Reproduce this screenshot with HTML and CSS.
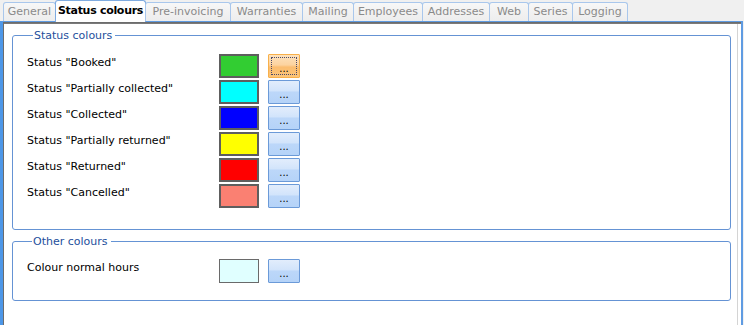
FILE: index.html
```html
<!DOCTYPE html>
<html>
<head>
  <meta charset="utf-8">
  <title>Settings</title>
  <link rel="stylesheet" href="styles.css">
</head>
<body>
  <div class="tabs">
    <div class="tab t-general">General</div>
    <div class="tab active t-status">Status colours</div>
    <div class="tab t-pre">Pre-invoicing</div>
    <div class="tab t-warr">Warranties</div>
    <div class="tab t-mail">Mailing</div>
    <div class="tab t-empl">Employees</div>
    <div class="tab t-addr">Addresses</div>
    <div class="tab t-web">Web</div>
    <div class="tab t-series">Series</div>
    <div class="tab t-log">Logging</div>
  </div>
  <div class="panel">
    <fieldset class="group">
      <legend>Status colours</legend>
      <div class="row">
        <label>Status "Booked"</label>
        <div class="swatch green"></div>
        <button class="pick focused"><span>...</span></button>
      </div>
      <div class="row">
        <label>Status "Partially collected"</label>
        <div class="swatch cyan"></div>
        <button class="pick"><span>...</span></button>
      </div>
      <div class="row">
        <label>Status "Collected"</label>
        <div class="swatch blue"></div>
        <button class="pick"><span>...</span></button>
      </div>
      <div class="row">
        <label>Status "Partially returned"</label>
        <div class="swatch yellow"></div>
        <button class="pick"><span>...</span></button>
      </div>
      <div class="row">
        <label>Status "Returned"</label>
        <div class="swatch red"></div>
        <button class="pick"><span>...</span></button>
      </div>
      <div class="row">
        <label>Status "Cancelled"</label>
        <div class="swatch salmon"></div>
        <button class="pick"><span>...</span></button>
      </div>
    </fieldset>
    <fieldset class="group other">
      <legend>Other colours</legend>
      <div class="row">
        <label>Colour normal hours</label>
        <div class="swatch lightcyan"></div>
        <button class="pick"><span>...</span></button>
      </div>
    </fieldset>
  </div>
</body>
</html>
```

FILE: styles.css
```css
body {
  margin: 0;
  width: 744px;
  height: 325px;
  overflow: hidden;
  background: #f0f0f0;
  font-family: "DejaVu Sans", Tahoma, sans-serif;
  font-size: 11px;
  color: #000;
}

/* tab strip */
.tabs {
  display: flex;
  align-items: flex-end;
  height: 21px;
  padding-left: 3px;
  position: relative;
  z-index: 1;
}

.tab {
  box-sizing: border-box;
  height: 19px;
  border: 1px solid #a9c7ec;
  border-bottom: none;
  border-radius: 3px 3px 0 0;
  background: linear-gradient(#f7f7f7, #ededed);
  color: #8a8a8a;
  display: flex;
  align-items: center;
  justify-content: center;
  margin-right: -1px;
  padding-bottom: 1px;
  white-space: nowrap;
}

.tab.active {
  height: 22px;
  margin-bottom: -1px;
  background: #fff;
  border-color: #7fabe0;
  color: #000;
  font-weight: bold;
  letter-spacing: -0.3px;
  padding-bottom: 2px;
}

.t-general { width: 53px; }
.t-status { width: 91px; }
.t-pre { width: 86px; }
.t-warr { width: 73px; }
.t-mail { width: 52px; }
.t-empl { width: 70px; }
.t-addr { width: 68px; }
.t-web { width: 40px; }
.t-series { width: 45px; }
.t-log { width: 56px; }

/* page body */
.panel {
  box-sizing: border-box;
  height: 304px;
  margin-right: 1px;
  background: #fff;
  border-top: 1px solid #5f9be2;
  border-left: 3px solid #4d97e8;
  border-right: 2px solid #5f9be2;
  box-shadow: inset 1px 1px 0 #6c6c6c, inset 0 2px 0 #7a7a7a, inset -3px 0 0 #fff, inset -4px 0 0 #d4d4d4;
  padding: 7px 0 0 9px;
}

.group {
  width: 719px;
  box-sizing: border-box;
  margin: 0;
  border: 1px solid #6593d4;
  border-radius: 3px;
  padding: 12px 0 19px 14px;
}

.group legend {
  color: #1d4f9c;
  padding: 0 3px 0 1px;
  margin-left: 6px;
  line-height: 13px;
}

.group.other {
  margin-top: 5px;
  padding-top: 11px;
  padding-bottom: 15px;
}

.group.other legend {
  margin-left: 5px;
}

.row {
  display: flex;
  align-items: flex-start;
  height: 26px;
}

.row label {
  width: 192px;
  padding-top: 2px;
  line-height: 13px;
}

.swatch {
  box-sizing: border-box;
  width: 40px;
  height: 24px;
  border: 2px solid #5e5e5e;
}

.green { background: #32cd32; }
.cyan { background: #00ffff; }
.blue { background: #0000ff; }
.yellow { background: #ffff00; }
.red { background: #ff0000; }
.salmon { background: #fa8072; }
.lightcyan { background: #e0ffff; border-width: 1px; border-color: #6a6a6a; }

.pick {
  box-sizing: border-box;
  width: 32px;
  height: 24px;
  margin-left: 9px;
  padding: 0 0 3px;
  border: 1px solid #6b9ad8;
  border-radius: 1px;
  background: linear-gradient(#e2edfc 0%, #d2e4fb 45%, #bcd7f9 50%, #b5d3f8 100%);
  font-family: "DejaVu Sans", Tahoma, sans-serif;
  font-size: 10px;
  color: #000;
  display: flex;
  align-items: flex-end;
  justify-content: center;
}

.pick.focused {
  border-color: #f8b04a;
  background: linear-gradient(#fde2bd 0%, #fcd3a0 45%, #fbbd70 55%, #fbc479 100%);
  outline: 1px dotted #4a4a6a;
  outline-offset: -4px;
}
```
